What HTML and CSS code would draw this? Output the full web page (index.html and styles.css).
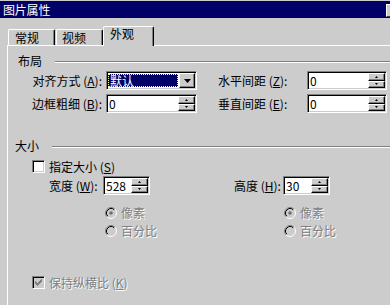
FILE: index.html
```html
<!DOCTYPE html>
<html lang="zh-CN">
<head>
<meta charset="utf-8">
<title>图片属性</title>
<link rel="stylesheet" href="styles.css">
</head>
<body>
<div class="titlebar">
  <span class="title">图片属性</span>
  <div class="close"></div>
</div>
<div class="tabs">
  <div class="tab tab-1">常规</div>
  <div class="tab tab-2">视频</div>
  <div class="tab active">外观</div>
</div>
<div class="panel">
  <div class="group group-layout"><span>布局</span><div class="etch"></div></div>

  <div class="row row-first">
    <div class="lbl-l">对齐方式 (<u>A</u>):</div>
    <div class="field combo">
      <div class="sel">默认</div>
      <div class="dd-btn"><svg width="7" height="4" viewBox="0 0 7 4"><polygon points="0,0 7,0 3.5,4" fill="#000"/></svg></div>
    </div>
    <div class="lbl-r">水平间距 (<u>Z</u>):</div>
    <div class="field num-r">
      <div class="value">0</div>
      <div class="spin"><div class="sb"><svg width="3" height="2" viewBox="0 0 3 2"><polygon points="1.5,0 3,2 0,2" fill="#000"/></svg></div><div class="sb"><svg width="3" height="2" viewBox="0 0 3 2"><polygon points="0,0 3,0 1.5,2" fill="#000"/></svg></div></div>
    </div>
  </div>

  <div class="row">
    <div class="lbl-l">边框粗细 (<u>B</u>):</div>
    <div class="field num-l">
      <div class="value">0</div>
      <div class="spin"><div class="sb"><svg width="3" height="2" viewBox="0 0 3 2"><polygon points="1.5,0 3,2 0,2" fill="#000"/></svg></div><div class="sb"><svg width="3" height="2" viewBox="0 0 3 2"><polygon points="0,0 3,0 1.5,2" fill="#000"/></svg></div></div>
    </div>
    <div class="lbl-r">垂直间距 (<u>E</u>):</div>
    <div class="field num-r">
      <div class="value">0</div>
      <div class="spin"><div class="sb"><svg width="3" height="2" viewBox="0 0 3 2"><polygon points="1.5,0 3,2 0,2" fill="#000"/></svg></div><div class="sb"><svg width="3" height="2" viewBox="0 0 3 2"><polygon points="0,0 3,0 1.5,2" fill="#000"/></svg></div></div>
    </div>
  </div>

  <div class="group group-size"><span>大小</span><div class="etch"></div></div>

  <div class="check-row check-size">
    <div class="cb"></div>
    <span class="cb-text">指定大小 (<u>S</u>)</span>
  </div>

  <div class="dims">
    <div class="dim dim-w">
      <div class="dim-lbl">宽度 (<u>W</u>):</div>
      <div class="field num-s">
        <div class="value">528</div>
        <div class="spin"><div class="sb"><svg width="3" height="2" viewBox="0 0 3 2"><polygon points="1.5,0 3,2 0,2" fill="#000"/></svg></div><div class="sb"><svg width="3" height="2" viewBox="0 0 3 2"><polygon points="0,0 3,0 1.5,2" fill="#000"/></svg></div></div>
      </div>
      <div class="radios">
        <div class="radio-row"><svg class="radio" width="12" height="12" viewBox="0 0 12 12"><circle cx="6" cy="6" r="5" fill="#ccc"/><path d="M2.11 9.89A5.5 5.5 0 0 1 9.89 2.11" stroke="#808080" fill="none"/><path d="M9.89 2.11A5.5 5.5 0 0 1 2.11 9.89" stroke="#fff" fill="none"/><path d="M2.82 9.18A4.5 4.5 0 0 1 9.18 2.82" stroke="#000" fill="none"/><circle cx="6" cy="6" r="1.8" fill="#707070"/></svg><span class="dis">像素</span></div>
        <div class="radio-row"><svg class="radio" width="12" height="12" viewBox="0 0 12 12"><circle cx="6" cy="6" r="5" fill="#ccc"/><path d="M2.11 9.89A5.5 5.5 0 0 1 9.89 2.11" stroke="#808080" fill="none"/><path d="M9.89 2.11A5.5 5.5 0 0 1 2.11 9.89" stroke="#fff" fill="none"/><path d="M2.82 9.18A4.5 4.5 0 0 1 9.18 2.82" stroke="#000" fill="none"/></svg><span class="dis">百分比</span></div>
      </div>
    </div>
    <div class="dim dim-h">
      <div class="dim-lbl">高度 (<u>H</u>):</div>
      <div class="field num-s">
        <div class="value">30</div>
        <div class="spin"><div class="sb"><svg width="3" height="2" viewBox="0 0 3 2"><polygon points="1.5,0 3,2 0,2" fill="#000"/></svg></div><div class="sb"><svg width="3" height="2" viewBox="0 0 3 2"><polygon points="0,0 3,0 1.5,2" fill="#000"/></svg></div></div>
      </div>
      <div class="radios">
        <div class="radio-row"><svg class="radio" width="12" height="12" viewBox="0 0 12 12"><circle cx="6" cy="6" r="5" fill="#ccc"/><path d="M2.11 9.89A5.5 5.5 0 0 1 9.89 2.11" stroke="#808080" fill="none"/><path d="M9.89 2.11A5.5 5.5 0 0 1 2.11 9.89" stroke="#fff" fill="none"/><path d="M2.82 9.18A4.5 4.5 0 0 1 9.18 2.82" stroke="#000" fill="none"/><circle cx="6" cy="6" r="1.8" fill="#707070"/></svg><span class="dis">像素</span></div>
        <div class="radio-row"><svg class="radio" width="12" height="12" viewBox="0 0 12 12"><circle cx="6" cy="6" r="5" fill="#ccc"/><path d="M2.11 9.89A5.5 5.5 0 0 1 9.89 2.11" stroke="#808080" fill="none"/><path d="M9.89 2.11A5.5 5.5 0 0 1 2.11 9.89" stroke="#fff" fill="none"/><path d="M2.82 9.18A4.5 4.5 0 0 1 9.18 2.82" stroke="#000" fill="none"/></svg><span class="dis">百分比</span></div>
      </div>
    </div>
  </div>

  <div class="check-row check-ratio">
    <div class="cb cb-dis"><svg width="11" height="11" viewBox="0 0 11 11"><path transform="translate(2 2)" d="M0 2h1v3h-1z M1 3h1v3h-1z M2 4h1v3h-1z M3 3h1v3h-1z M4 2h1v3h-1z M5 1h1v3h-1z M6 0h1v3h-1z" fill="#808080" shape-rendering="crispEdges"/></svg></div>
    <span class="cb-text dis">保持纵横比 (<u>K</u>)</span>
  </div>
</div>
</body>
</html>
```

FILE: styles.css
```css
* { box-sizing: border-box; }

html, body {
  margin: 0;
  padding: 0;
}

body {
  width: 390px;
  height: 305px;
  overflow: hidden;
  background: #cccccc;
  color: #000;
  font-family: "Noto Sans CJK SC", "Liberation Sans", sans-serif;
  font-size: 12px;
  line-height: 12px;
}

u { text-decoration: underline; text-underline-offset: 1px; }

/* title bar */
.titlebar {
  margin-top: 1px;
  height: 17px;
  background: #000066;
  color: #fff;
  display: flex;
  align-items: center;
  padding-left: 3px;
  overflow: hidden;
}
.title { line-height: 12px; letter-spacing: -0.2px; }
.close {
  margin-left: auto;
  margin-right: -12px;
  align-self: flex-start;
  margin-top: 3px;
  width: 16px;
  height: 13px;
  background: #cccccc;
  border-top: 1px solid #fff;
  border-left: 1px solid #fff;
  border-bottom: 1px solid #404040;
}

/* tabs */
.tabs {
  position: relative;
  z-index: 1;
  display: flex;
  align-items: flex-end;
  height: 27px;
  padding-left: 8px;
}
.tab {
  height: 16px;
  width: 47px;
  padding-top: 2px;
  padding-left: 6px;
  background: #cccccc;
  border-top: 1px solid #fff;
  border-left: 1px solid #fff;
  border-right: 1px solid #000;
  border-top-left-radius: 2px;
  border-top-right-radius: 2px;
  box-shadow: inset -1px 0 #808080;
  line-height: 12px;
}
.tab-2 { margin-left: 1px; padding-left: 5px; }
.tab.active {
  width: 51px;
  height: 20px;
  padding-top: 1px;
  padding-left: 6px;
  margin-bottom: -1px;
}

/* panel */
.panel {
  margin-left: 7px;
  height: 260px;
  border-left: 1px solid #fff;
  border-top: 1px solid #fff;
}

.group {
  display: flex;
  align-items: center;
  height: 12px;
}
.group-layout { margin-top: 9px; padding-left: 10px; }
.group-size { margin-top: 27px; padding-left: 7px; }
.etch {
  flex: 1;
  height: 2px;
  margin-top: 2px;
  margin-left: 13px;
  border-top: 1px solid #808080;
  border-bottom: 1px solid #fff;
}

/* form rows */
.row {
  display: flex;
  align-items: center;
  height: 19px;
  margin-top: 4px;
}
.lbl-l { width: 96px; text-align: right; padding-right: 2px; }
.lbl-r { width: 89px; margin-left: 21px; padding-left: 0; }

.field {
  display: flex;
  align-items: stretch;
  height: 19px;
  padding: 1px;
  background: #fff;
  border-top: 1px solid #808080;
  border-left: 1px solid #808080;
  border-right: 1px solid #fff;
  border-bottom: 1px solid #fff;
  box-shadow: inset 1px 1px #000, inset -1px -1px #cccccc;
}
.combo { width: 91px; margin-left: 2px; }
.num-l { width: 91px; margin-left: 2px; }
.num-r { width: 80px; }
.num-s { width: 47px; }

.value {
  flex: 1;
  padding-left: 1px;
  display: flex;
  align-items: center;
}

.sel {
  flex: 1;
  margin: 1px 1px 1px 0;
  padding-left: 2px;
  background: #000066;
  color: #fff;
  outline: 1px dotted #ffff99;
  outline-offset: -1px;
  display: flex;
  align-items: center;
}
.dd-btn {
  width: 16px;
  display: flex;
  align-items: center;
  justify-content: center;
  background: #cccccc;
  border-top: 1px solid #fff;
  border-left: 1px solid #fff;
  border-right: 1px solid #000;
  border-bottom: 1px solid #000;
  box-shadow: inset -1px -1px #808080;
}
.dd-btn svg { display: block; }

.spin {
  width: 17px;
  display: flex;
  flex-direction: column;
}
.sb {
  flex: 1;
  display: flex;
  align-items: center;
  justify-content: center;
  background: #cccccc;
  border-top: 1px solid #fff;
  border-left: 1px solid #fff;
  border-right: 1px solid #000;
  border-bottom: 1px solid #000;
  box-shadow: inset -1px -1px #808080;
}
.sb svg { display: block; }

/* checkboxes */
.check-row {
  display: flex;
  align-items: center;
  height: 13px;
  padding-left: 24px;
}
.check-size { margin-top: 8px; }
.check-ratio { margin-top: 39px; }
.cb {
  width: 13px;
  height: 13px;
  background: #fff;
  border-top: 1px solid #808080;
  border-left: 1px solid #808080;
  border-right: 1px solid #fff;
  border-bottom: 1px solid #fff;
  box-shadow: inset 1px 1px #000, inset -1px -1px #cccccc;
}
.cb svg { display: block; }
.cb-dis { background: #cccccc; }
.cb-text { margin-left: 4px; }

.dis {
  color: #808080;
  text-shadow: 1px 1px 0 #fff;
}

/* dimensions */
.dims {
  display: flex;
  margin-top: 3px;
}
.dim {
  display: grid;
  align-items: center;
}
.dim-w {
  margin-left: 41px;
  width: 185px;
  grid-template-columns: 54px 47px;
}
.dim-h {
  grid-template-columns: 49px 47px;
}
.dim-lbl { height: 19px; display: flex; align-items: center; }

.radios {
  grid-column: 2 / span 2;
  margin-top: 12px;
  display: flex;
  flex-direction: column;
  gap: 6px;
}
.dim-w .radios { margin-left: 2px; }
.dim-h .radios { margin-left: 1px; }
.radio-row {
  display: flex;
  align-items: center;
  height: 12px;
  white-space: nowrap;
}
.radio { display: block; margin-right: 4px; flex: none; }
```
